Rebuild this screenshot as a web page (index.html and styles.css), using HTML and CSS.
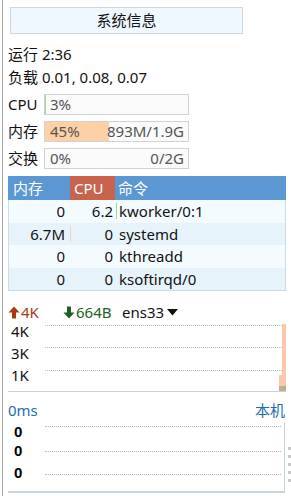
FILE: index.html
```html
<!DOCTYPE html>
<html>
<head>
<meta charset="utf-8">
<link rel="stylesheet" href="styles.css">
</head>
<body>
<div class="frame">
  <div class="title-btn">系统信息</div>
  <div class="info">运行 2:36</div>
  <div class="info">负载 0.01, 0.08, 0.07</div>
  <div class="meters">
    <div class="meter-row">
      <span class="meter-label">CPU</span>
      <div class="meter">
        <div class="fill fill-cpu" style="width:1px"></div>
        <span class="m-left">3%</span>
      </div>
    </div>
    <div class="meter-row">
      <span class="meter-label">内存</span>
      <div class="meter">
        <div class="fill fill-mem" style="width:45%"></div>
        <span class="m-left">45%</span>
        <span class="m-right">893M/1.9G</span>
      </div>
    </div>
    <div class="meter-row">
      <span class="meter-label">交换</span>
      <div class="meter">
        <span class="m-left">0%</span>
        <span class="m-right">0/2G</span>
      </div>
    </div>
  </div>
  <div class="proc">
    <div class="prow phead">
      <div class="c-mem">内存</div>
      <div class="c-cpu sorted">CPU</div>
      <div class="c-cmd">命令</div>
    </div>
    <div class="prow odd">
      <div class="c-mem num">0</div>
      <div class="c-cpu num"><span>6.2</span><i class="tick tick-cpu"></i></div>
      <div class="c-cmd">kworker/0:1</div>
    </div>
    <div class="prow even">
      <div class="c-mem num"><span>6.7M</span><i class="tick tick-mem"></i></div>
      <div class="c-cpu num">0</div>
      <div class="c-cmd">systemd</div>
    </div>
    <div class="prow odd">
      <div class="c-mem num">0</div>
      <div class="c-cpu num">0</div>
      <div class="c-cmd">kthreadd</div>
    </div>
    <div class="prow even">
      <div class="c-mem num">0</div>
      <div class="c-cpu num">0</div>
      <div class="c-cmd">ksoftirqd/0</div>
    </div>
  </div>
  <div class="net">
    <span class="up"><svg width="12" height="13" viewBox="0 0 12 13"><path d="M6 0.5 L11.5 6.5 H8 V12.5 H4 V6.5 H0.5 Z" fill="#a83a12"/></svg>4K</span>
    <span class="down"><svg width="12" height="13" viewBox="0 0 12 13"><path d="M6 12.5 L11.5 6.5 H8 V0.5 H4 V6.5 H0.5 Z" fill="#1d5e22"/></svg>664B</span>
    <span class="iface">ens33<svg class="caret" width="11" height="7" viewBox="0 0 11 7"><path d="M0 0 H11 L5.5 6.5 Z" fill="#111"/></svg></span>
  </div>
  <div class="chart net-chart">
    <div class="grid" style="top:1px"></div>
    <div class="grid" style="top:23px"></div>
    <div class="grid" style="top:46px"></div>
    <span class="ylab" style="top:-4px">4K</span>
    <span class="ylab" style="top:18px">3K</span>
    <span class="ylab" style="top:40px">1K</span>
    <div class="bar-up"></div>
    <div class="bar-up2"></div>
    <div class="bar-down"></div>
  </div>
  <div class="lat-head">
    <span>0ms</span>
    <span>本机</span>
  </div>
  <div class="chart lat-chart">
    <div class="grid" style="top:3px"></div>
    <div class="grid" style="top:28px"></div>
    <div class="grid" style="top:51px"></div>
    <span class="ylab zero" style="top:0px">0</span>
    <span class="ylab zero" style="top:19px">0</span>
    <span class="ylab zero" style="top:41px">0</span>
  </div>
  <div class="scroll-dots"><i></i><i></i><i></i><i></i><i></i></div>
</div>
</body>
</html>
```

FILE: styles.css
```css
html, body {
  margin: 0;
  padding: 0;
  background: #fff;
}
body {
  font-family: "Noto Sans", "Noto Sans CJK SC", sans-serif;
  font-size: 15px;
  color: #111;
  width: 291px;
  height: 496px;
  overflow: hidden;
}
.frame {
  margin-left: 2px;
  border-left: 1px solid #a8a8a8;
  height: 496px;
  padding: 7px 5px 0 5px;
  box-sizing: border-box;
  position: relative;
}
.title-btn {
  margin-left: 2px;
  width: 233px;
  height: 27px;
  box-sizing: border-box;
  border: 1px solid #cfd6dc;
  background: #f0f8ff;
  text-align: center;
  line-height: 25px;
  font-size: 15px;
  color: #111;
  margin-bottom: 9px;
}
.info {
  height: 23px;
  line-height: 23px;
  white-space: nowrap;
}
.meters {
  margin-top: 5px;
  display: flex;
  flex-direction: column;
  gap: 6px;
}
.meter-row {
  display: flex;
  align-items: center;
  height: 21px;
}
.meter-label {
  width: 36px;
  line-height: 21px;
}
.meter {
  position: relative;
  width: 145px;
  height: 21px;
  box-sizing: border-box;
  border: 1px solid #d2d2d2;
  background: #fafafa;
  display: flex;
  justify-content: space-between;
  align-items: center;
  padding: 0 4px 0 5px;
  color: #555;
  line-height: 19px;
}
.fill {
  position: absolute;
  left: 0;
  top: 0;
  bottom: 0;
}
.fill-cpu {
  background: #9fd49f;
  width: 1px;
}
.fill-mem {
  background: #fdd0a6;
}
.m-left, .m-right {
  position: relative;
}
.proc {
  margin-top: 7px;
  border: 1px solid #c6ddef;
  border-top: none;
  width: 278px;
  box-sizing: border-box;
}
.prow {
  display: flex;
  height: 22.5px;
  line-height: 22.5px;
}
.phead {
  height: 24px;
  line-height: 24px;
  background: #5b97d3;
  color: #fff;
  margin: 0 -1px;
}
.odd { background: #f4fbff; }
.even { background: #e7f3fa; }
.c-mem {
  width: 62px;
  box-sizing: border-box;
  padding-left: 5px;
}
.c-cpu {
  width: 45px;
  box-sizing: border-box;
  padding-left: 4px;
}
.sorted { background: #c8644e; }
.c-cmd {
  flex: 1;
  padding-left: 3px;
  white-space: nowrap;
}
.num {
  display: flex;
  justify-content: flex-end;
  align-items: center;
  padding-left: 0;
  padding-right: 7px;
}
.c-cpu.num { padding-right: 3px; }
.c-mem.num { padding-right: 6px; }
.tick {
  display: block;
  width: 1px;
  height: 16px;
  margin-left: 3px;
  margin-right: -4px;
}
.c-mem .tick { margin-left: 5px; margin-right: -6px; }
.tick-cpu { background: #9fd49f; }
.tick-mem { background: #f7d3b3; }
.net {
  margin-top: 9px;
  height: 24px;
  display: flex;
  align-items: center;
  gap: 0;
  white-space: nowrap;
}
.net svg { margin-right: 1px; vertical-align: -1px; }
.up { color: #a83a12; width: 55px; }
.down { color: #1d5e22; width: 59px; }
.iface { color: #111; }
.caret { margin-left: 3px; vertical-align: 2px !important; }
.chart {
  position: relative;
  box-sizing: border-box;
}
.net-chart {
  height: 68px;
  width: 278px;
  border-bottom: 1px solid #c5d2da;
}
.grid {
  position: absolute;
  left: 37px;
  right: 4px;
  height: 0;
  border-top: 1px dotted #b8b8b8;
}
.ylab {
  position: absolute;
  left: 3px;
  line-height: 22px;
  color: #111;
}
.bar-up {
  position: absolute;
  right: 0;
  top: 0;
  bottom: 0;
  width: 4px;
  background: #fcc8ad;
}
.bar-up2 {
  position: absolute;
  right: 4px;
  bottom: 0;
  height: 16px;
  width: 3px;
  background: #fcc8ad;
}
.bar-down {
  position: absolute;
  right: 0;
  bottom: 0;
  height: 5px;
  width: 7px;
  background: #bfae88;
}
.lat-head {
  margin-top: 8px;
  display: flex;
  justify-content: space-between;
  color: #1e6db4;
  height: 23px;
  line-height: 20px;
  width: 277px;
}
.lat-chart {
  height: 70px;
  width: 277px;
  border-right: 1px solid #c5d6e0;
  border-bottom: 2px solid #c5d6e0;
}
.lat-chart .grid { left: 37px; right: 3px; }
.zero {
  left: 6px;
  font-weight: bold;
  font-family: "Liberation Sans", sans-serif;
  font-size: 15px;
  line-height: 17px;
  color: #000;
}
.scroll-dots {
  position: absolute;
  right: 0;
  top: 447px;
  width: 3px;
  display: flex;
  flex-direction: column;
  gap: 5px;
}
.scroll-dots i {
  display: block;
  width: 3px;
  height: 3px;
  background: #c8c8c8;
}
```
